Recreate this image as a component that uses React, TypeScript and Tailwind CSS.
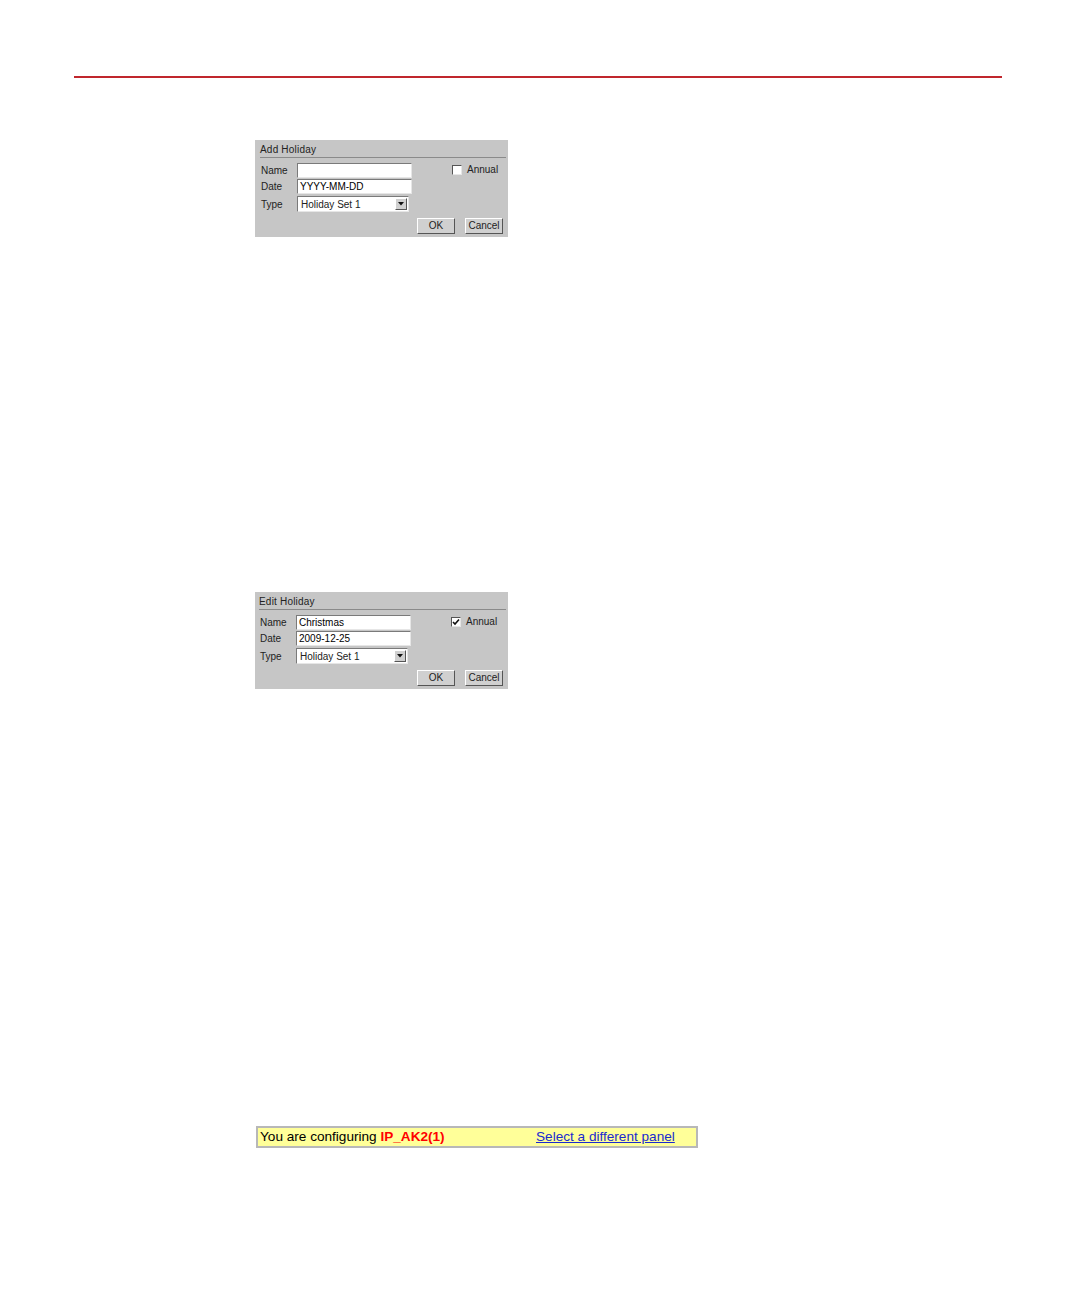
import React from 'react';

type HolidayProps = {
  title: string;
  name: string;
  date: string;
  annual: boolean;
  shift?: boolean;
};

const inputCls =
  'h-[15px] w-[115px] bg-white border border-t-[#7a7a7a] border-l-[#7a7a7a] border-b-[#e6e6e6] border-r-[#e6e6e6] px-[2px] text-[10px] leading-[13px] text-black';

const buttonCls =
  'h-[16px] w-[38px] bg-[#d0d0d0] border border-t-white border-l-white border-b-[#555555] border-r-[#555555] text-[10px] leading-[14px] text-[#222222] text-center';

const HolidayDialog = ({ title, name, date, annual, shift }: HolidayProps) => {
  return (
    <div
      className={`w-[253px] h-[97px] bg-[#c6c6c6] pt-[4px] pr-[2px] text-[10px] text-[#222222] ${shift ? 'pl-[5px]' : 'pl-[6px]'}`}
      style={{ fontFamily: '"Liberation Sans", Arial, sans-serif' }}
    >
      <div className="-ml-[1px] leading-[12px] pb-[1px] border-b border-[#8a8a8a] tracking-[0.2px]">{title}</div>
      <div className="mt-[5px] flex">
        <div className="flex flex-col gap-[1px]">
          <div className="flex items-center h-[15px]">
            <span className="w-[36px]">Name</span>
            <div className={inputCls}>{name}</div>
          </div>
          <div className="flex items-center h-[15px]">
            <span className="w-[36px]">Date</span>
            <div className={inputCls}>{date}</div>
          </div>
          <div className="flex items-center h-[16px] mt-[1px]">
            <span className="w-[36px]">Type</span>
            <div className="h-[16px] w-[112px] bg-white border border-t-[#7a7a7a] border-l-[#7a7a7a] border-b-[#e6e6e6] border-r-[#e6e6e6] flex items-center">
              <span className="flex-1 pl-[3px] leading-[13px]">Holiday Set 1</span>
              <div className="h-[12px] w-[12px] mr-[1px] bg-[#d0d0d0] border border-t-white border-l-white border-b-[#555555] border-r-[#555555] flex items-center justify-center">
                <svg width="6" height="4" viewBox="0 0 6 4">
                  <path d="M0 0 L6 0 L3 3.5 Z" fill="#111111" />
                </svg>
              </div>
            </div>
          </div>
        </div>
        <div className="ml-[40px] mt-[2px] flex items-start">
          <div className="h-[10px] w-[10px] bg-white border border-t-[#555555] border-l-[#555555] border-b-[#e6e6e6] border-r-[#e6e6e6] flex items-center justify-center">
            {annual && (
              <svg width="8" height="8" viewBox="0 0 8 8">
                <path d="M1 4 L3 6 L7 1.5" stroke="#111111" strokeWidth="1.6" fill="none" />
              </svg>
            )}
          </div>
          <span className="ml-[5px] leading-[11px] -mt-[1px]">Annual</span>
        </div>
      </div>
      <div className="mt-[6px] flex justify-end gap-[10px] pr-[3px]">
        <div className={buttonCls}>OK</div>
        <div className={buttonCls}>Cancel</div>
      </div>
    </div>
  );
};

export default function App() {
  return (
    <div className="w-[1076px] h-[1304px] bg-white relative" style={{ fontFamily: '"Liberation Sans", Arial, sans-serif' }}>
      <div className="pt-[76px] pl-[74px]">
        <div className="w-[928px] h-[2px] bg-[#c0262d]" />
      </div>
      <div className="pl-[255px] pt-[62px]">
        <HolidayDialog title="Add Holiday" name="" date="YYYY-MM-DD" annual={false} />
      </div>
      <div className="pl-[255px] pt-[355px]">
        <HolidayDialog title="Edit Holiday" name="Christmas" date="2009-12-25" annual={true} shift />
      </div>
      <div className="pl-[256px] pt-[437px]">
        <div className="w-[442px] h-[22px] border-2 border-[#b8b8b8] bg-[#ffff99] flex items-center pl-[2px] text-[13.6px] leading-[18px]">
          <div className="w-[276px] whitespace-nowrap text-black">
            You are configuring <span className="font-bold text-[#ff0000]">IP_AK2(1)</span>
          </div>
          <span className="text-[#1a2ad0] underline whitespace-nowrap">Select a different panel</span>
        </div>
      </div>
    </div>
  );
}
